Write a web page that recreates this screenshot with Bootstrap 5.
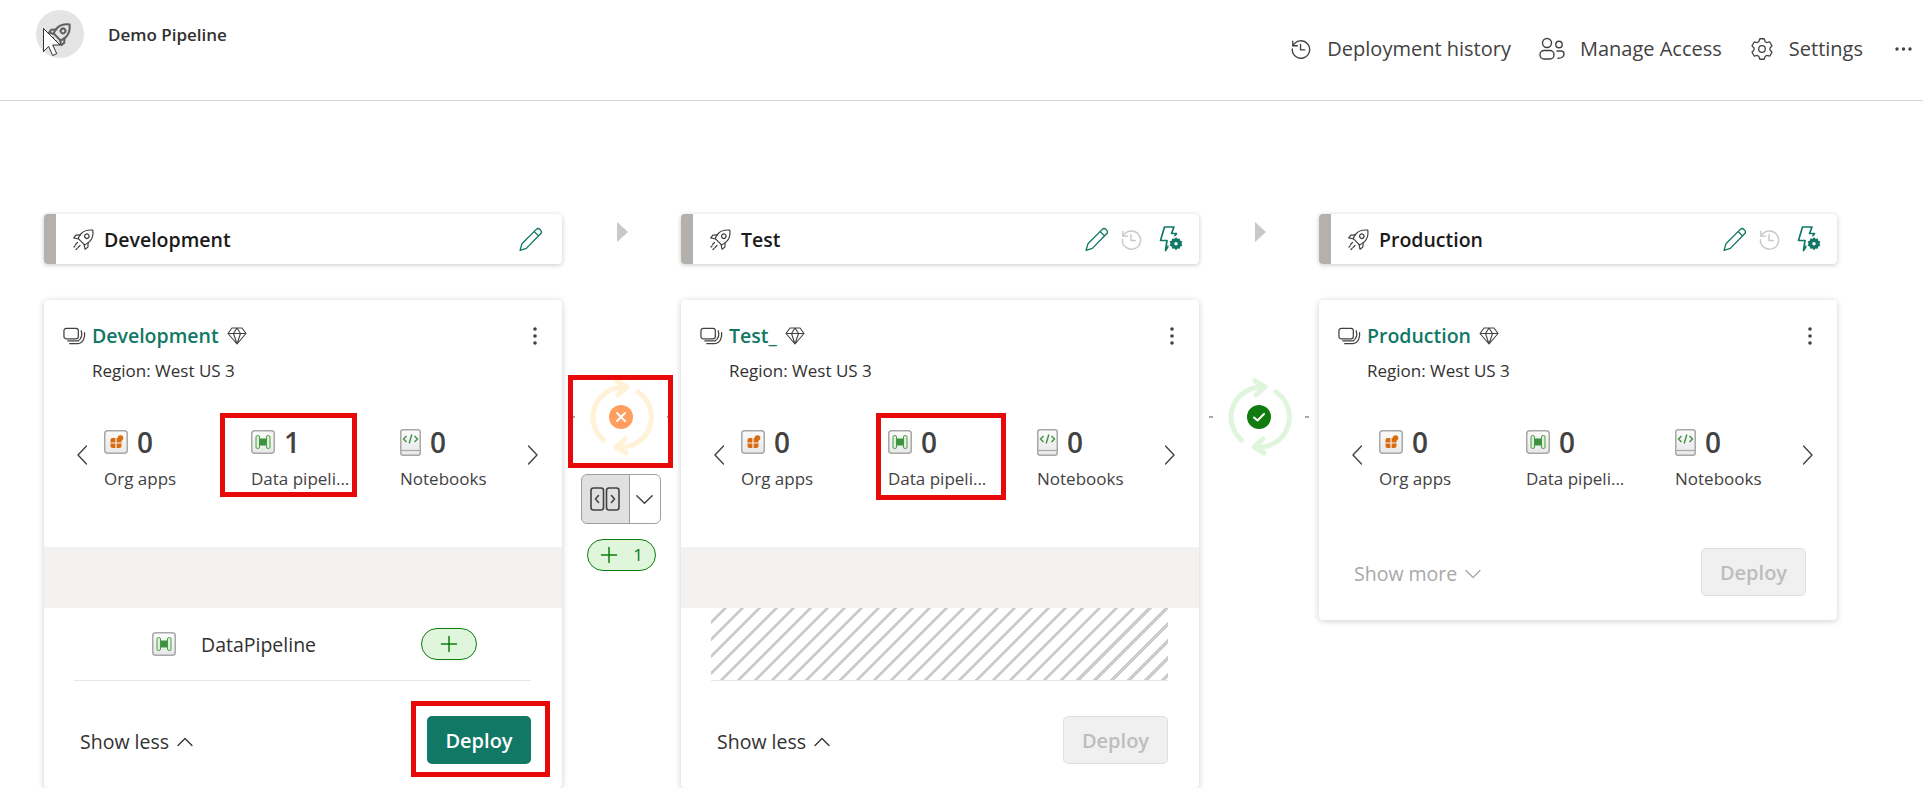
<!DOCTYPE html>
<html lang="en">
<head>
    <meta charset="UTF-8">
    <meta name="viewport" content="width=device-width, initial-scale=1.0">
    <title>Demo Pipeline</title>
    <link rel="stylesheet" href="https://cdn.jsdelivr.net/npm/bootstrap@5.3.0/dist/css/bootstrap.min.css">
    <style>
        body { background: #fff; color: #242424; font-family: "Open Sans", "Liberation Sans", sans-serif; font-size: 17px; }
        svg { display: block; flex: none; }

        /* top bar */
        .top-bar { height: 101px; border-bottom: 1px solid #d4d4d4; padding: 10px 11px 0 36px; }
        .avatar { width: 48px; height: 48px; background: #e4e4e4; color: #616161; stroke-width: 1.9; }
        .pointer { position: absolute; left: 7px; top: 18px; }
        .pipe-title { margin: 1px 0 0 24px; font-size: 17px; font-weight: 600; color: #323130; }
        .top-nav { gap: 28px; padding-top: 26px; font-size: 20px; color: #424242; }
        .top-link { gap: 15px; height: 26px; }

        /* board */
        .board { padding: 113px 0 0 44px; }
        .stage-col { width: 518px; }
        .link-col { width: 119px; }
        .link-col.wide { width: 120px; }
        .stage-head { height: 50px; border: 0; border-radius: 4px; overflow: hidden; box-shadow: 0 1px 5px rgba(0,0,0,.22); margin-bottom: 36px; }
        .head-strip { width: 12px; background: #b3b0ad; }
        .head-name { font-size: 19.5px; font-weight: 600; color: #1b1a19; margin: 2px 0 0 8px; }
        .head-rocket { margin-left: 16px; color: #424242; stroke-width: 1.2; }
        .teal { color: #117865; }
        .faded { color: #c8c8c8; }
        .pencil-only { margin-right: 19px; }
        .history-icon { margin-left: 11px; }

        .stage-card { border: 0; border-radius: 4px; box-shadow: 0 1px 6px rgba(0,0,0,.2); }
        .card-top { padding: 24px 24px 0 19px; }
        .ws-name { font-size: 19.5px; font-weight: 600; color: #117865; line-height: 24px; margin: 0 8px 0 6px; }
        .ws-icon { color: #424242; }
        .region { margin: 11px 0 44px 48px; line-height: 24px; color: #323130; }
        .metric-row { padding-left: 33px; height: 64px; margin-bottom: 56px; }
        .metric-row.short { margin-bottom: 0; }
        .metric { position: relative; width: 147px; }
        .metric.mid { width: 149px; }
        .metric.last { width: 128px; }
        .metric-top { height: 30px; gap: 9px; }
        .metric-num { font-size: 28px; font-weight: 600; color: #424242; line-height: 30px; }
        .metric-label { margin-top: 10px; line-height: 24px; color: #424242; white-space: nowrap; }
        .arrow-slot { width: 10px; margin: 0 17px 8px 0; color: #424242; }

        .grey-band { height: 61px; background: #f3f2f1; }
        .item-row { height: 73px; margin: 0 31px 0 30px; padding-left: 78px; border-bottom: 1px solid #e6e6e6; font-size: 19.5px; color: #323130; gap: 25px; }
        .item-row span { padding-top: 2px; }
        .add-pill { width: 56px; height: 32px; margin: 0 54px 0 auto; border: 1px solid #107c10; border-radius: 16px; background: #dff6dd; color: #107c10; }
        .hatch { height: 73px; margin: 0 31px 0 30px; border-bottom: 1px solid #e6e6e6; background: repeating-linear-gradient(135deg, #fff 0 9px, #cdcdcd 9px 12px); }

        .card-foot { padding: 35px 31px 24px 36px; }
        .card-foot.short { padding: 57px 31px 24px 35px; }
        .toggle-text { font-size: 19.5px; color: #323130; gap: 8px; padding-top: 3px; }
        .toggle-text.off { color: #a8a8a8; }
        .deploy-btn { width: 105px; height: 48px; padding: 2px 0 0; border-radius: 5px; font-size: 20px; font-weight: 600; }
        .deploy-btn.on { width: 104px; background: #117865; border: 0; color: #fff; }
        .deploy-btn.off { background: #f0f0f0; border: 1px solid #e0e0e0; color: #bdbdbd; opacity: 1; }

        /* connector between stages */
        .next-arrow { margin: 8px 0 0 2px; color: #c8c8c8; }
        .sync-row { position: relative; margin-top: 135px; gap: 6px; height: 80px; }
        .sync-row.nudge { margin-right: 2px; }
        .tick { width: 4px; height: 2px; background: #a8a8a8; }
        .compare-group { margin: 17px 2px 0 0; width: 80px; height: 50px; }
        .compare-group .btn { padding: 0; border-color: #9e9e9e; color: #424242; }
        .compare-left { width: 49px; background: #e0e0e0; }
        .compare-right { width: 31px; background: #fff; }
        .diff-pill { margin-top: 15px; width: 69px; height: 32px; gap: 15px; border: 1px solid #107c10; border-radius: 16px; background: #dff6dd; color: #107c10; font-size: 17px; }

        /* red annotation boxes drawn over the screenshot */
        .red-box { position: absolute; border: 5px solid #e80a0a; pointer-events: none; }
        .red-dev { left: -31px; top: -14px; width: 137px; height: 84px; }
        .red-test { left: -12px; top: -14px; width: 130px; height: 87px; }
        .red-sync { left: -3px; top: -2px; width: 105px; height: 93px; }
        .red-deploy { left: -16px; top: -15px; width: 139px; height: 76px; }
    </style>
</head>
<body>

<!-- shared icons -->
<svg width="0" height="0" class="position-absolute">
    <defs>
        <linearGradient id="tile-fill" x1="0" y1="0" x2="0" y2="1">
            <stop offset="0" stop-color="#fbfbfb"/>
            <stop offset="1" stop-color="#e8e8e8"/>
        </linearGradient>
        <symbol id="i-rocket" viewBox="0 0 24 24" fill="none" stroke="currentColor" stroke-linecap="round" stroke-linejoin="round">
            <g transform="rotate(45 12 12) translate(1 -1)">
                <path d="M11 .5c3.800 3 5.800 6.500 5.800 10.500 0 2-.5 4-1.200 5.800H6.400C5.700 15 5.200 13 5.200 11 5.200 7 7.200 3.500 11 .5z"/>
                <circle cx="11" cy="9" r="2.200"/>
                <path d="M5.600 12.500L2.500 16l.5 3.500 4.200-2.700M16.400 12.500l3.100 3.500-.5 3.500-4.200-2.700"/>
            </g>
            <path d="M5.500 15.500l-2 2M8 18.500l-2 2M3 19l-1 1M5 21.500l-1 1"/>
        </symbol>
        <symbol id="i-pencil" viewBox="0 0 24 24" fill="none" stroke="currentColor" stroke-width="1.300" stroke-linejoin="round">
            <path d="M2 22.500l1.800-6.500L17.500 2.300a2.500 2.500 0 0 1 3.500 0l.7.7a2.500 2.500 0 0 1 0 3.500L8 20.500z"/>
            <path d="M15.500 4.300l4.200 4.200"/>
        </symbol>
        <symbol id="i-history" viewBox="0 0 24 24" fill="none" stroke="currentColor" stroke-width="1.500" stroke-linecap="round" stroke-linejoin="round">
            <path d="M3 3.500v5h5"/>
            <path d="M3.400 8.500A9.500 9.500 0 1 1 2.500 12"/>
            <path d="M11.500 7v6h4.500"/>
        </symbol>
        <symbol id="i-bolt-gear" viewBox="0 0 24 26">
            <path d="M5.500 1H15l-2.500 6.500H17.500L6.500 24.500 8 14.500H1.500z" fill="none" stroke="currentColor" stroke-width="1.700" stroke-linejoin="round"/>
            <circle cx="17" cy="18" r="8" fill="#fff"/>
            <g transform="translate(-1.700 -.4) scale(1.100)">
                <path d="M17 10.500l1.400 1.500 2-.3.500 2 1.900.8-.8 1.900.8 1.900-1.900.8-.5 2-2-.3L17 22.300l-1.400-1.500-2 .3-.5-2-1.900-.8.8-1.900-.8-1.900 1.900-.8.5-2 2 .3z" fill="currentColor"/>
                <circle cx="17" cy="16.400" r="1.600" fill="#fff"/>
            </g>
        </symbol>
        <symbol id="i-stack" viewBox="0 0 24 18" fill="none" stroke="currentColor" stroke-width="1.300" stroke-linecap="round">
            <rect x="1" y="1" width="15" height="11" rx="2.500"/>
            <path d="M19 3.500c1.200 4 .3 8-3 10.500H5M22.500 5.500c.8 5-1.500 11-7 11.500H7"/>
        </symbol>
        <symbol id="i-gem" viewBox="0 0 20 18" fill="none" stroke="currentColor" stroke-width="1.100" stroke-linejoin="round">
            <path d="M5 1h10l4 5.500L10 17 1 6.500zM1 6.500h18M6.500 6.500L10 1l3.500 5.500L10 17z"/>
        </symbol>
        <symbol id="i-kebab" viewBox="0 0 6 20" fill="currentColor">
            <circle cx="3" cy="3" r="1.800"/><circle cx="3" cy="10" r="1.800"/><circle cx="3" cy="17" r="1.800"/>
        </symbol>
        <symbol id="i-prev" viewBox="0 0 10 20" fill="none" stroke="currentColor" stroke-width="1.400" stroke-linecap="round" stroke-linejoin="round">
            <path d="M9.500 1L1 10l8.500 9"/>
        </symbol>
        <symbol id="i-next" viewBox="0 0 10 20" fill="none" stroke="currentColor" stroke-width="1.400" stroke-linecap="round" stroke-linejoin="round">
            <path d="M.5 1L9 10l-8.500 9"/>
        </symbol>
        <symbol id="i-up" viewBox="0 0 16 10" fill="none" stroke="currentColor" stroke-width="1.300" stroke-linecap="round" stroke-linejoin="round">
            <path d="M1 8.500L8 1.500l7 7"/>
        </symbol>
        <symbol id="i-down" viewBox="0 0 16 10" fill="none" stroke="currentColor" stroke-width="1.300" stroke-linecap="round" stroke-linejoin="round">
            <path d="M1 1.500L8 8.500l7-7"/>
        </symbol>
        <symbol id="i-plus" viewBox="0 0 18 18" fill="none" stroke="currentColor" stroke-width="1.500" stroke-linecap="round">
            <path d="M9 1.500v15M1.500 9h15"/>
        </symbol>
        <symbol id="i-org" viewBox="0 0 24 24">
            <rect x=".75" y=".75" width="22.500" height="22.500" rx="3" fill="url(#tile-fill)" stroke="#a8a8a8" stroke-width="1.500"/>
            <rect x="6.500" y="8" width="11" height="10" rx="2" fill="#d96b10"/>
            <path d="M6.500 13h11M12 8v10" stroke="#f3f3f3" stroke-width="1.200"/>
            <circle cx="16.500" cy="8" r="2.800" fill="#d96b10"/>
        </symbol>
        <symbol id="i-pipe" viewBox="0 0 24 24">
            <rect x=".75" y=".75" width="22.500" height="22.500" rx="3" fill="url(#tile-fill)" stroke="#a8a8a8" stroke-width="1.500"/>
            <rect x="5" y="5.500" width="3.500" height="13" rx="1.500" fill="#dff0d8" stroke="#4a9e46"/>
            <rect x="15.500" y="5.500" width="3.500" height="13" rx="1.500" fill="#dff0d8" stroke="#4a9e46"/>
            <rect x="8.500" y="8.500" width="7" height="7" fill="#3f9142"/>
        </symbol>
        <symbol id="i-book" viewBox="0 0 21 27">
            <path d="M3 .75h15A2.300 2.300 0 0 1 20.250 3v21a2.300 2.300 0 0 1-2.250 2.250H3A2.300 2.300 0 0 1 .75 24V3A2.300 2.300 0 0 1 3 .75z" fill="url(#tile-fill)" stroke="#a8a8a8" stroke-width="1.500"/>
            <path d="M.75 21.500h19.500" stroke="#a8a8a8" stroke-width="1.200"/>
            <path d="M6.500 7L3.500 10l3 3M14.500 7l3 3-3 3M11.800 5.500l-2.600 9" fill="none" stroke="#3f9142" stroke-width="1.400"/>
        </symbol>
        <symbol id="i-sync" viewBox="0 0 80 80" fill="none" stroke="currentColor" stroke-width="5" stroke-linecap="round" stroke-linejoin="round">
            <path d="M22.500 63A30 30 0 0 1 44 10.300"/>
            <path d="M36 4l10 6-9 8"/>
            <path d="M57 15a30 30 0 0 1-21 54.700"/>
            <path d="M45 76l-10-6 9-8"/>
        </symbol>
    </defs>
</svg>

<header class="top-bar d-flex justify-content-between align-items-start">
    <div class="d-flex align-items-center">
        <div class="avatar rounded-circle position-relative d-flex align-items-center justify-content-center">
            <svg width="26" height="26"><use href="#i-rocket"/></svg>
            <svg class="pointer" width="18" height="28" viewBox="0 0 18 28">
                <path d="M.5.5v23l5.200-5 4 9 4-1.800-4-8.700h7.300z" fill="#fff" stroke="#000" stroke-width=".8"/>
            </svg>
        </div>
        <div class="pipe-title">Demo Pipeline</div>
    </div>
    <nav class="top-nav d-flex align-items-center">
        <div class="top-link d-flex align-items-center">
            <svg width="22" height="22"><use href="#i-history"/></svg>
            <span>Deployment history</span>
        </div>
        <div class="top-link d-flex align-items-center">
            <svg width="26" height="24" viewBox="0 0 26 24" fill="none" stroke="currentColor" stroke-width="1.400">
                <circle cx="8" cy="6" r="4.500"/>
                <circle cx="20" cy="7.500" r="3.200"/>
                <rect x="1" y="13.500" width="14" height="8.500" rx="4"/>
                <path d="M17.500 14H22a3 3 0 0 1 3 3c0 2.800-2.500 4.500-6.500 4.300"/>
            </svg>
            <span>Manage Access</span>
        </div>
        <div class="top-link d-flex align-items-center">
            <svg width="24" height="24" viewBox="0 0 24 24" fill="none" stroke="currentColor" stroke-width="1.300" stroke-linejoin="round">
                <path d="M14.180 1.730L15.250 4.690 16.700 5.530 19.800 4.970 21.990 8.760 19.960 11.160V12.840L21.990 15.240 19.800 19.030 16.700 18.470 15.250 19.310 14.180 22.270H9.820L8.750 19.310 7.300 18.470 4.200 19.030 2.010 15.240 4.040 12.840V11.160L2.010 8.760 4.200 4.970 7.300 5.530 8.750 4.690 9.820 1.730z"/>
                <circle cx="12" cy="12" r="3.300"/>
            </svg>
            <span>Settings</span>
        </div>
        <svg class="ms-1" width="17" height="4" viewBox="0 0 17 4" fill="#424242">
            <circle cx="2" cy="2" r="1.700"/><circle cx="8.500" cy="2" r="1.700"/><circle cx="15" cy="2" r="1.700"/>
        </svg>
    </nav>
</header>

<main class="board d-flex align-items-start">

    <!-- Development -->
    <section class="stage-col">
        <div class="card stage-head flex-row align-items-center">
            <div class="head-strip align-self-stretch"></div>
            <svg class="head-rocket" width="24" height="24"><use href="#i-rocket"/></svg>
            <div class="head-name">Development</div>
            <svg class="teal ms-auto pencil-only" width="25" height="25"><use href="#i-pencil"/></svg>
        </div>
        <div class="card stage-card">
            <div class="card-top d-flex align-items-center">
                <svg class="ws-icon" width="23" height="18"><use href="#i-stack"/></svg>
                <div class="ws-name">Development</div>
                <svg class="ws-icon" width="20" height="18"><use href="#i-gem"/></svg>
                <svg class="ms-auto ws-icon" width="6" height="20"><use href="#i-kebab"/></svg>
            </div>
            <div class="region">Region: West US 3</div>
            <div class="metric-row d-flex align-items-center">
                <svg class="arrow-slot" height="20"><use href="#i-prev"/></svg>
                <div class="metric">
                    <div class="metric-top d-flex align-items-center"><svg width="24" height="24"><use href="#i-org"/></svg><span class="metric-num">0</span></div>
                    <div class="metric-label">Org apps</div>
                </div>
                <div class="metric mid">
                    <div class="metric-top d-flex align-items-center"><svg width="24" height="24"><use href="#i-pipe"/></svg><span class="metric-num">1</span></div>
                    <div class="metric-label">Data pipeli...</div>
                    <div class="red-box red-dev"></div>
                </div>
                <div class="metric last">
                    <div class="metric-top d-flex align-items-center"><svg width="21" height="27"><use href="#i-book"/></svg><span class="metric-num">0</span></div>
                    <div class="metric-label">Notebooks</div>
                </div>
                <svg class="arrow-slot" height="20"><use href="#i-next"/></svg>
            </div>
            <div class="grey-band"></div>
            <div class="item-row d-flex align-items-center">
                <svg width="24" height="24"><use href="#i-pipe"/></svg>
                <span>DataPipeline</span>
                <div class="add-pill d-flex align-items-center justify-content-center"><svg width="18" height="18"><use href="#i-plus"/></svg></div>
            </div>
            <div class="card-foot d-flex justify-content-between align-items-center">
                <div class="toggle-text d-flex align-items-center">Show less <svg width="16" height="10"><use href="#i-up"/></svg></div>
                <div class="position-relative">
                    <button type="button" class="btn deploy-btn on">Deploy</button>
                    <div class="red-box red-deploy"></div>
                </div>
            </div>
        </div>
    </section>

    <!-- Development to Test -->
    <div class="link-col d-flex flex-column align-items-center">
        <svg class="next-arrow" width="11" height="20" viewBox="0 0 11 20" fill="currentColor"><path d="M0 0l11 10L0 20z"/></svg>
        <div class="sync-row nudge d-flex align-items-center">
            <div class="tick"></div>
            <div class="position-relative d-flex align-items-center justify-content-center">
                <svg width="80" height="80" style="color:#fff2d6"><use href="#i-sync"/></svg>
                <svg class="position-absolute" width="24" height="24" viewBox="0 0 24 24">
                    <circle cx="12" cy="12" r="12" fill="#ff9e5e"/>
                    <path d="M8 8l8 8M16 8l-8 8" stroke="#fff" stroke-width="2" stroke-linecap="round"/>
                </svg>
            </div>
            <div class="tick"></div>
            <div class="red-box red-sync"></div>
        </div>
        <div class="btn-group compare-group" role="group">
            <button type="button" class="btn compare-left d-flex align-items-center justify-content-center">
                <svg width="30" height="24" viewBox="0 0 30 24" fill="none" stroke="currentColor" stroke-width="1.600" stroke-linecap="round" stroke-linejoin="round">
                    <rect x="1" y="1" width="12.500" height="22" rx="2.500"/>
                    <rect x="16.500" y="1" width="12.500" height="22" rx="2.500"/>
                    <path d="M8.500 8.500L5.500 12l3 3.500M21.500 8.500l3 3.500-3 3.500"/>
                </svg>
            </button>
            <button type="button" class="btn compare-right d-flex align-items-center justify-content-center">
                <svg width="19" height="11" viewBox="0 0 16 10"><use href="#i-down"/></svg>
            </button>
        </div>
        <div class="diff-pill d-flex align-items-center justify-content-center">
            <svg width="18" height="18"><use href="#i-plus"/></svg>
            <span>1</span>
        </div>
    </div>

    <!-- Test -->
    <section class="stage-col">
        <div class="card stage-head flex-row align-items-center">
            <div class="head-strip align-self-stretch"></div>
            <svg class="head-rocket" width="24" height="24"><use href="#i-rocket"/></svg>
            <div class="head-name">Test</div>
            <svg class="teal ms-auto" width="25" height="25"><use href="#i-pencil"/></svg>
            <svg class="faded history-icon" width="23" height="23"><use href="#i-history"/></svg>
            <svg class="teal ms-3 me-3" width="24" height="26"><use href="#i-bolt-gear"/></svg>
        </div>
        <div class="card stage-card">
            <div class="card-top d-flex align-items-center">
                <svg class="ws-icon" width="23" height="18"><use href="#i-stack"/></svg>
                <div class="ws-name">Test_</div>
                <svg class="ws-icon" width="20" height="18"><use href="#i-gem"/></svg>
                <svg class="ms-auto ws-icon" width="6" height="20"><use href="#i-kebab"/></svg>
            </div>
            <div class="region">Region: West US 3</div>
            <div class="metric-row d-flex align-items-center">
                <svg class="arrow-slot" height="20"><use href="#i-prev"/></svg>
                <div class="metric">
                    <div class="metric-top d-flex align-items-center"><svg width="24" height="24"><use href="#i-org"/></svg><span class="metric-num">0</span></div>
                    <div class="metric-label">Org apps</div>
                </div>
                <div class="metric mid">
                    <div class="metric-top d-flex align-items-center"><svg width="24" height="24"><use href="#i-pipe"/></svg><span class="metric-num">0</span></div>
                    <div class="metric-label">Data pipeli...</div>
                    <div class="red-box red-test"></div>
                </div>
                <div class="metric last">
                    <div class="metric-top d-flex align-items-center"><svg width="21" height="27"><use href="#i-book"/></svg><span class="metric-num">0</span></div>
                    <div class="metric-label">Notebooks</div>
                </div>
                <svg class="arrow-slot" height="20"><use href="#i-next"/></svg>
            </div>
            <div class="grey-band"></div>
            <div class="hatch"></div>
            <div class="card-foot d-flex justify-content-between align-items-center">
                <div class="toggle-text d-flex align-items-center">Show less <svg width="16" height="10"><use href="#i-up"/></svg></div>
                <button type="button" class="btn deploy-btn off" disabled>Deploy</button>
            </div>
        </div>
    </section>

    <!-- Test to Production -->
    <div class="link-col wide d-flex flex-column align-items-center">
        <svg class="next-arrow" width="11" height="20" viewBox="0 0 11 20" fill="currentColor"><path d="M0 0l11 10L0 20z"/></svg>
        <div class="sync-row d-flex align-items-center">
            <div class="tick"></div>
            <div class="position-relative d-flex align-items-center justify-content-center">
                <svg width="80" height="80" style="color:#dff6dd"><use href="#i-sync"/></svg>
                <svg class="position-absolute" width="24" height="24" viewBox="0 0 24 24">
                    <circle cx="12" cy="12" r="12" fill="#107c10"/>
                    <path d="M7 12.500l3.500 3L17 9" fill="none" stroke="#fff" stroke-width="2" stroke-linecap="round" stroke-linejoin="round"/>
                </svg>
            </div>
            <div class="tick"></div>
        </div>
    </div>

    <!-- Production -->
    <section class="stage-col">
        <div class="card stage-head flex-row align-items-center">
            <div class="head-strip align-self-stretch"></div>
            <svg class="head-rocket" width="24" height="24"><use href="#i-rocket"/></svg>
            <div class="head-name">Production</div>
            <svg class="teal ms-auto" width="25" height="25"><use href="#i-pencil"/></svg>
            <svg class="faded history-icon" width="23" height="23"><use href="#i-history"/></svg>
            <svg class="teal ms-3 me-3" width="24" height="26"><use href="#i-bolt-gear"/></svg>
        </div>
        <div class="card stage-card">
            <div class="card-top d-flex align-items-center">
                <svg class="ws-icon" width="23" height="18"><use href="#i-stack"/></svg>
                <div class="ws-name">Production</div>
                <svg class="ws-icon" width="20" height="18"><use href="#i-gem"/></svg>
                <svg class="ms-auto ws-icon" width="6" height="20"><use href="#i-kebab"/></svg>
            </div>
            <div class="region">Region: West US 3</div>
            <div class="metric-row short d-flex align-items-center">
                <svg class="arrow-slot" height="20"><use href="#i-prev"/></svg>
                <div class="metric">
                    <div class="metric-top d-flex align-items-center"><svg width="24" height="24"><use href="#i-org"/></svg><span class="metric-num">0</span></div>
                    <div class="metric-label">Org apps</div>
                </div>
                <div class="metric mid">
                    <div class="metric-top d-flex align-items-center"><svg width="24" height="24"><use href="#i-pipe"/></svg><span class="metric-num">0</span></div>
                    <div class="metric-label">Data pipeli...</div>
                </div>
                <div class="metric last">
                    <div class="metric-top d-flex align-items-center"><svg width="21" height="27"><use href="#i-book"/></svg><span class="metric-num">0</span></div>
                    <div class="metric-label">Notebooks</div>
                </div>
                <svg class="arrow-slot" height="20"><use href="#i-next"/></svg>
            </div>
            <div class="card-foot short d-flex justify-content-between align-items-center">
                <div class="toggle-text off d-flex align-items-center">Show more <svg width="16" height="10"><use href="#i-down"/></svg></div>
                <button type="button" class="btn deploy-btn off" disabled>Deploy</button>
            </div>
        </div>
    </section>

</main>

<script src="https://cdn.jsdelivr.net/npm/bootstrap@5.3.0/dist/js/bootstrap.bundle.min.js"></script>
</body>
</html>
